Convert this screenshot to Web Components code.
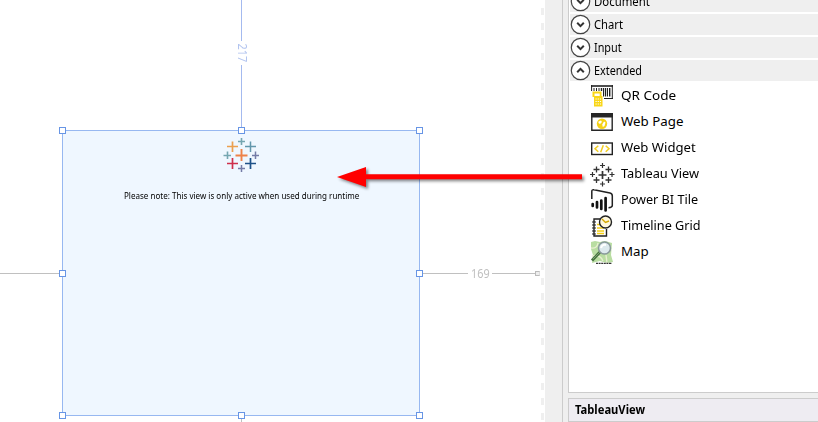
<!DOCTYPE html>
<html lang="en"><head><meta charset="utf-8"><title>View designer</title>
<style>html,body{margin:0;width:818px;height:422px;overflow:hidden;background:#efefef}body{font-family:"Noto Sans","Open Sans",sans-serif;color:#000}</style></head>
<body><view-designer></view-designer>
<script>
const define=(name,html,setup)=>customElements.define(name,class extends HTMLElement{
  connectedCallback(){
    if(this.shadowRoot)return;
    const t=document.createElement('template');t.innerHTML=html;
    this.attachShadow({mode:'open'}).append(t.content.cloneNode(true));
    if(setup)setup(this,this.shadowRoot);
  }
});

/* Single line of text stretched to an exact advance width */
define('fit-text',`<style>:host{display:block;white-space:nowrap;line-height:1}span{display:inline-block;transform-origin:0 50%}</style><span><slot></slot></span>`,(h,r)=>{
  const s=r.querySelector('span'),w=+h.getAttribute('width');
  h.style.width=w+'px';
  s.style.transform='scaleX('+(w/s.offsetWidth)+')';
});

const icons={
qr:`<g stroke="#222" fill="none"><path d="M0 1H22" stroke-width="1.600"/><path d="M21.300 0V14M13 13.500H22"/><path d="M.6 0V6"/><path d="M3 3V6M5.500 3V6M8 3V6M12.500 3V11.500M16.500 3V11.500" stroke-width="1"/><path d="M10.500 3V6M14.500 3V11.500M18.700 3V11.500" stroke-width="1.400"/></g><path d="M1.500 6.500H10.500V11H11.500V21.500H3V12H1.500Z" fill="#f9d616"/><path d="M3.500 8.500H8.700V11H3.500Z" fill="#fff"/><path d="M4.500 14H10.500M4.500 16.500H10.500M4.500 19H10.500" stroke="#fff" stroke-width="1.200" stroke-dasharray="1.200 1"/>`,
page:`<path d="M.8 3H21.200V19.200H.8Z" fill="#fff" stroke="#262626" stroke-width="1.400"/><path d="M0 2H22V6.500H0Z" fill="#262626"/><circle cx="11" cy="12.700" r="5.200" fill="#f5d218"/><path d="M7.500 10.500l2.500-1 1 1.500-2 2-1.500-1zM13 10.500l1.500 1-1 3.500-1.700 1-.6-2.500z" fill="#fff"/>`,
widget:`<rect x=".7" y="6" width="20.600" height="11.500" fill="#fff" stroke="#222" stroke-width="1.400"/><path d="M7.300 8.700L4 11.700L7.300 14.700M14.700 8.700L18 11.700L14.700 14.700M12.300 8.200L9.700 15.200" fill="none" stroke="#f2cd20" stroke-width="1.500"/>`,
tableau:`<g fill="none" stroke="#333"><path d="M11.500 8V16M7.500 12H15.500" stroke-width="1.700"/><path d="M5.500 3.500V9.500M2.500 6.500H8.500M17.500 3.500V9.500M14.500 6.500H20.500M5.500 14V20M2.500 17H8.500M17.500 14V20M14.500 17H20.500" stroke-width="1.300"/><path d="M11.500 0V5M9 2.500H14M11.500 18.500V23.500M9 21H14M-1 11.500H4M1.500 9V14M18.500 11.500H23.500M21 9V14" stroke-width="1.200"/></g>`,
power:`<path d="M.8 10V2.500Q.8 .3 3 .8L19 4Q21.300 4.500 21.300 7V16.500Q21.300 18.500 17.500 18.700" fill="none" stroke="#222" stroke-width="1.500"/><g fill="none" stroke="#111" stroke-width="2.700" stroke-linecap="round"><path d="M1.700 15V17M6 13V18.500M10.300 11.500V20M14.600 9V21.500"/></g>`,
time:`<path d="M9 4H3V21H15.500V14" fill="#fff" stroke="#222" stroke-width="1.400"/><path d="M1 7H5M1 10H5M1 13H5M1 16H5M1 19H5" stroke="#222" stroke-width="1.200"/><path d="M6 9.500H11M6 13H13M6 16H13M6 18.500H13" stroke="#f5d018" stroke-width="1.700"/><circle cx="14.500" cy="7" r="6" fill="#fff8dc" stroke="#222" stroke-width="1.400"/><path d="M11 4L14.500 7.500L18 6" fill="none" stroke="#d5a800" stroke-width="1.400"/>`,
map:`<path d="M0 1L4 0L9 1L14 0L21 2L20 14L22 21L16 22L9 20L1 22L2 14L0 8Z" fill="#b9dda2"/><path d="M0 7Q6 8 7 2M1 15Q9 13 12 20M16 22L15 14" fill="none" stroke="#e8efd2" stroke-width="1.400"/><path d="M9 11L1 19.500" stroke="#477340" stroke-width="3"/><path d="M9 11L2 18" stroke="#7ca072" stroke-width="1"/><circle cx="13.500" cy="7" r="6" fill="#dce9ed" stroke="#89999b" stroke-width="1.500"/><path d="M10 7Q11 3 15 4" fill="none" stroke="#fff" stroke-width="2"/><path d="M5 22.300H21" stroke="#333" stroke-width="1.200" stroke-dasharray="2 .6"/>`};

define('tool-item',`<style>:host{display:flex;height:26px;align-items:center;padding-left:22px;font-size:13.300px}svg{display:block;width:22px;height:23px;overflow:visible;margin-right:8px}</style><svg viewBox="0 0 22 23"></svg><fit-text></fit-text>`,(h,r)=>{
  r.querySelector('svg').innerHTML=icons[h.getAttribute('icon')];
  const old=r.querySelector('fit-text'),n=document.createElement('fit-text');
  n.setAttribute('width',h.getAttribute('width'));n.textContent=h.getAttribute('label');old.replaceWith(n);
});

define('tool-group',`<style>:host{display:block}header{display:flex;align-items:center;height:21px;margin:0 0 2px 1px;background:#efefef;font-size:12px}svg{display:block;width:21px;height:21px;overflow:visible;margin-right:3px}:host([open]) .v{transform:rotate(180deg);transform-origin:10.500px 10.500px}</style><header><svg viewBox="0 0 21 21"><circle cx="10.500" cy="10.500" r="9.200" fill="#fff" stroke="#444" stroke-width="1.200"/><path class="v" d="M7.200 8.800L10.500 12.100L13.800 8.800" fill="none" stroke="#333" stroke-width="2"/></svg></header><slot></slot>`,(h,r)=>{
  const n=document.createElement('fit-text');n.setAttribute('width',h.getAttribute('width'));n.textContent=h.getAttribute('label');r.querySelector('header').append(n);
});

define('tool-box',`<style>:host{display:block;box-sizing:border-box;height:393px;border:1px solid #ccc;border-width:0 0 1px 1px;background:#fff;overflow:hidden}.scroll{margin-top:-9px}.items{display:block}</style>
<div class="scroll"><tool-group label="Document" width="56"></tool-group><tool-group label="Chart" width="29"></tool-group><tool-group label="Input" width="28"></tool-group><tool-group label="Extended" width="48" open><div class="items">
<tool-item icon="qr" label="QR Code" width="55"></tool-item><tool-item icon="page" label="Web Page" width="62"></tool-item><tool-item icon="widget" label="Web Widget" width="75"></tool-item><tool-item icon="tableau" label="Tableau View" width="78"></tool-item><tool-item icon="power" label="Power BI Tile" width="77"></tool-item><tool-item icon="time" label="Timeline Grid" width="80"></tool-item><tool-item icon="map" label="Map" width="28"></tool-item></div></tool-group></div>`);

define('property-panel',`<style>:host{display:flex;align-items:center;box-sizing:border-box;height:24px;margin-top:5px;padding:0 0 1px 6px;border:1px solid #ccc;border-right:0;background:#eeecf2;font-size:12px;font-weight:700}</style><fit-text width="70">TableauView</fit-text>`);

define('measure-label',`<style>:host{position:absolute;font-size:12px;color:#bfbfbf}:host([vertical]){color:#b2c4ef;transform:rotate(90deg)}</style><fit-text width="19"><slot></slot></fit-text>`,(h,r)=>{
  r.querySelector('fit-text').textContent=h.textContent;
});

define('resize-handle',`<style>:host{position:absolute;box-sizing:border-box;width:7px;height:7px;border:1px solid #6795e5;background:#fff}</style>`);

define('tableau-mark',`<style>:host{display:block;width:36px;height:36px}svg{display:block}</style><svg width="36" height="36" viewBox="0 0 36 36" fill="none"><path d="M18.500 12V24M12.500 18.500H24.500" stroke="#ee8248" stroke-width="1.900"/><path d="M9.500 4.500V15M4 9.500H15" stroke="#eba04f" stroke-width="1.700"/><path d="M27.500 4.500V15M22 9.500H33" stroke="#6297ac" stroke-width="1.500"/><path d="M9.500 21V32M4 26.500H15" stroke="#ce304c" stroke-width="1.700"/><path d="M27.500 21V32M22 26.500H33" stroke="#1d5189" stroke-width="1.700"/><path d="M18.500 1V8M15 4.500H22M4.500 14.500V22M.5 18.500H8" stroke="#75a6b1" stroke-width="1.600"/><path d="M18.500 28V35M15 31.500H22M32.500 14.500V22M29 18.500H36" stroke="#747ca7" stroke-width="1.500"/></svg>`);

define('tableau-view',`<style>:host{position:absolute;box-sizing:border-box;left:62px;top:130px;width:358px;height:286px;border:1px solid #97b8f1;background:#eff7ff;display:flex;flex-direction:column;align-items:center;padding-top:6px;font-size:8.700px}fit-text{margin-top:19px}</style><tableau-mark></tableau-mark><fit-text width="235">Please note: This view is only active when used during runtime</fit-text>`);

define('design-canvas',`<style>:host{display:block;position:relative;height:422px;background:#fff;overflow:hidden}i{position:absolute;background:#c0c0c0}.b{background:#a4baef}.edge{left:541px;top:0;width:3px;height:422px;background:repeating-linear-gradient(transparent 0 8px,#efefef 8px 15px)}.end{left:535px;top:271px;width:5px;height:5px;box-sizing:border-box;border:1px solid #bbb;border-right-color:#ddd;background:#eee}</style>
<i class="edge"></i><i class="b" style="left:241px;top:0;width:1px;height:41px"></i><i class="b" style="left:241px;top:65px;width:1px;height:65px"></i><i style="left:0;top:273px;width:60px;height:1px"></i><i style="left:420px;top:273px;width:48px;height:1px"></i><i style="left:492px;top:273px;width:43px;height:1px"></i><i style="left:241px;top:416px;width:1px;height:6px"></i><i class="end"></i>
<measure-label vertical style="left:232px;top:47px">217</measure-label><measure-label style="left:471px;top:268px">169</measure-label><tableau-view></tableau-view>
<resize-handle style="left:59px;top:127px"></resize-handle><resize-handle style="left:238px;top:127px"></resize-handle><resize-handle style="left:416px;top:127px"></resize-handle><resize-handle style="left:59px;top:270px"></resize-handle><resize-handle style="left:416px;top:270px"></resize-handle><resize-handle style="left:59px;top:412px"></resize-handle><resize-handle style="left:238px;top:412px"></resize-handle><resize-handle style="left:416px;top:412px"></resize-handle>`);

define('drag-arrow',`<style>:host{position:absolute;left:330px;top:160px;width:265px;height:36px;pointer-events:none}svg{display:block;overflow:visible;filter:drop-shadow(2px 2px 1.500px #0007)}</style><svg width="265" height="36"><path d="M7 17L36 7V14.200H252V19.200H36V27Z" fill="#f00"/></svg>`);

define('view-designer',`<style>:host{position:relative;display:grid;grid-template-columns:545px 17px 256px;width:818px;height:422px;overflow:hidden;background:#efefef}aside{box-sizing:border-box;padding-left:5px;border-left:1px solid #ccc}</style><design-canvas></design-canvas><div></div><aside><tool-box></tool-box><property-panel></property-panel></aside><drag-arrow></drag-arrow>`);
</script></body></html>
